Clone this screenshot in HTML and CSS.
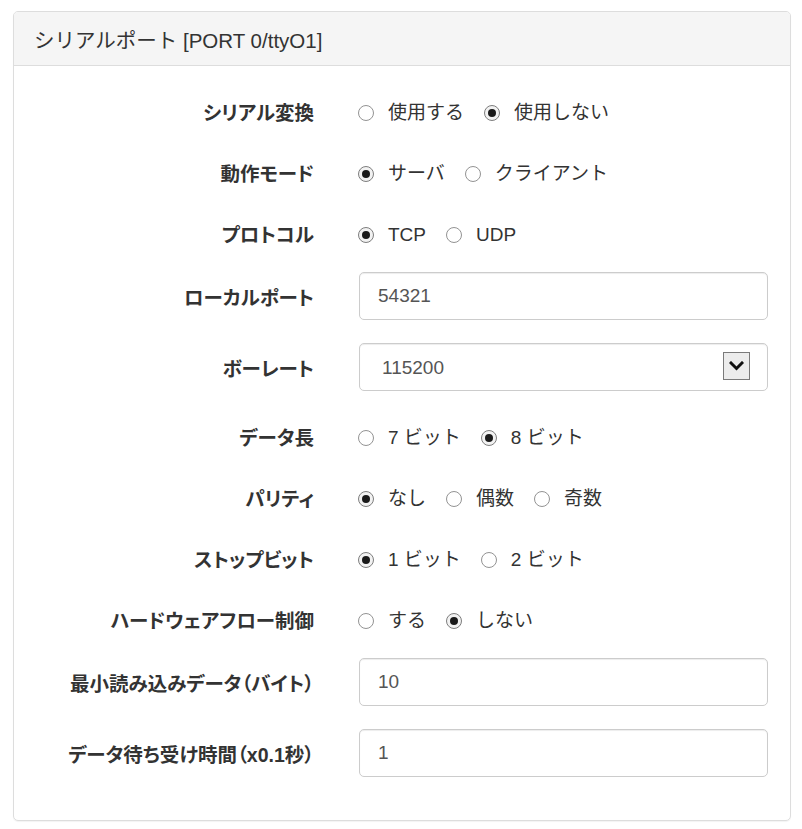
FILE: index.html
```html
<!DOCTYPE html>
<html lang="ja">
<head>
    <meta charset="UTF-8">
    <meta name="viewport" content="width=device-width, initial-scale=1.0">
    <title>シリアルポート設定</title>
    <link rel="stylesheet" href="styles.css">
</head>
<body>
    <div class="panel">
        <div class="panel-heading">
            <h3 class="panel-title">シリアルポート [PORT 0/ttyO1]</h3>
        </div>
        <div class="panel-body">
            <form class="form-horizontal">
                <div class="form-group radio-group">
                    <label class="control-label">シリアル変換</label>
                    <div class="controls">
                        <label class="radio-inline"><input type="radio" name="convert">使用する</label>
                        <label class="radio-inline"><input type="radio" name="convert" checked>使用しない</label>
                    </div>
                </div>
                <div class="form-group radio-group">
                    <label class="control-label">動作モード</label>
                    <div class="controls">
                        <label class="radio-inline"><input type="radio" name="mode" checked>サーバ</label>
                        <label class="radio-inline"><input type="radio" name="mode">クライアント</label>
                    </div>
                </div>
                <div class="form-group radio-group">
                    <label class="control-label">プロトコル</label>
                    <div class="controls">
                        <label class="radio-inline"><input type="radio" name="protocol" checked>TCP</label>
                        <label class="radio-inline"><input type="radio" name="protocol">UDP</label>
                    </div>
                </div>
                <div class="form-group">
                    <label class="control-label" for="localPort">ローカルポート</label>
                    <input type="text" id="localPort" class="form-control" value="54321">
                </div>
                <div class="form-group">
                    <label class="control-label" for="baudRate">ボーレート</label>
                    <div class="select-wrap">
                        <select id="baudRate" class="form-control select-control">
                            <option>9600</option>
                            <option>38400</option>
                            <option>57600</option>
                            <option selected>115200</option>
                        </select>
                        <span class="select-arrow">
                            <svg width="15" height="10" viewBox="0 0 15 10" fill="none" stroke="#111" stroke-width="3" stroke-linecap="square">
                                <polyline points="2,2 7.5,7.5 13,2"></polyline>
                            </svg>
                        </span>
                    </div>
                </div>
                <div class="form-group radio-group">
                    <label class="control-label">データ長</label>
                    <div class="controls">
                        <label class="radio-inline"><input type="radio" name="databits">7 ビット</label>
                        <label class="radio-inline"><input type="radio" name="databits" checked>8 ビット</label>
                    </div>
                </div>
                <div class="form-group radio-group">
                    <label class="control-label">パリティ</label>
                    <div class="controls">
                        <label class="radio-inline"><input type="radio" name="parity" checked>なし</label>
                        <label class="radio-inline"><input type="radio" name="parity">偶数</label>
                        <label class="radio-inline"><input type="radio" name="parity">奇数</label>
                    </div>
                </div>
                <div class="form-group radio-group">
                    <label class="control-label">ストップビット</label>
                    <div class="controls">
                        <label class="radio-inline"><input type="radio" name="stopbits" checked>1 ビット</label>
                        <label class="radio-inline"><input type="radio" name="stopbits">2 ビット</label>
                    </div>
                </div>
                <div class="form-group radio-group">
                    <label class="control-label">ハードウェアフロー制御</label>
                    <div class="controls">
                        <label class="radio-inline"><input type="radio" name="flow">する</label>
                        <label class="radio-inline"><input type="radio" name="flow" checked>しない</label>
                    </div>
                </div>
                <div class="form-group">
                    <label class="control-label" for="minRead">最小読み込みデータ（バイト）</label>
                    <input type="text" id="minRead" class="form-control" value="10">
                </div>
                <div class="form-group">
                    <label class="control-label" for="waitTime">データ待ち受け時間（x0.1秒）</label>
                    <input type="text" id="waitTime" class="form-control" value="1">
                </div>
            </form>
        </div>
    </div>
</body>
</html>
```

FILE: styles.css
```css
body {
    margin: 0;
    background-color: #FFFFFF;
    color: #333333;
    font-family: "Liberation Sans", "Noto Sans CJK JP", sans-serif;
    font-size: 19px;
}
.panel {
    margin: 11px 11px 7px 13px;
    border: 1px solid #DDDDDD;
    border-radius: 5px;
    box-shadow: 0 1px 1px rgba(0, 0, 0, 0.05);
}
.panel-heading {
    padding: 1px 20px 0;
    box-sizing: border-box;
    height: 54px;
    display: flex;
    align-items: center;
    background-color: #F5F5F5;
    border-bottom: 1px solid #DDDDDD;
    border-radius: 4px 4px 0 0;
}
.panel-title {
    margin: 0;
    font-size: 20.5px;
    font-weight: normal;
    color: #333333;
}
.panel-body {
    padding: 23px 22px 20px 0;
}
.form-group {
    display: grid;
    grid-template-columns: 300px 409px;
    column-gap: 45px;
    align-items: center;
    margin-bottom: 23px;
}
.control-label {
    text-align: right;
    font-size: 19.5px;
    font-weight: bold;
    color: #333333;
    white-space: nowrap;
    font-feature-settings: "palt";
}
.radio-group {
    height: 38px;
    box-sizing: border-box;
    padding-top: 10px;
    line-height: 28px;
    align-items: start;
}
.controls {
    display: flex;
    gap: 21px;
}
.radio-inline {
    display: flex;
    align-items: center;
    cursor: pointer;
}
.radio-inline input {
    appearance: none;
    -webkit-appearance: none;
    flex: none;
    width: 16px;
    height: 16px;
    margin: 0 14px 0 -1px;
    border: 1px solid #939393;
    border-radius: 50%;
    background-color: #FFFFFF;
    box-sizing: border-box;
    display: grid;
    place-items: center;
}
.radio-inline input:checked {
    border-color: #7E7E7E;
    background-color: #F2F2F2;
}
.radio-inline input:checked::before {
    content: "";
    width: 8px;
    height: 8px;
    border-radius: 50%;
    background-color: #1A1A1A;
}
.form-control {
    width: 100%;
    height: 48px;
    box-sizing: border-box;
    padding: 0 18px;
    border: 1px solid #CCCCCC;
    border-radius: 5px;
    background-color: #FFFFFF;
    box-shadow: inset 0 1px 1px rgba(0, 0, 0, 0.075);
    font-family: "Liberation Sans", "Noto Sans CJK JP", sans-serif;
    font-size: 19px;
    color: #555555;
    outline: none;
}
.select-wrap {
    position: relative;
}
.select-control {
    appearance: none;
    -webkit-appearance: none;
    padding-left: 22px;
}
.select-arrow {
    position: absolute;
    right: 18px;
    top: 9px;
    width: 27px;
    height: 28px;
    box-sizing: border-box;
    border: 1px solid #7A7A7A;
    background-color: #ECECEC;
    display: flex;
    align-items: center;
    justify-content: center;
    pointer-events: none;
}
```
